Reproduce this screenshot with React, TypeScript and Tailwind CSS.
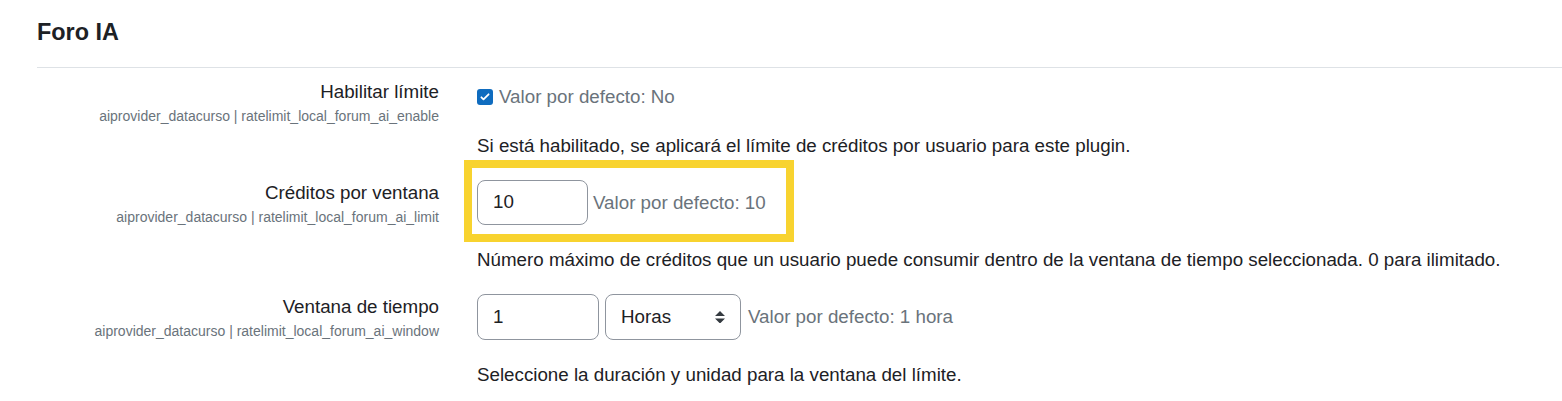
import { ReactNode } from "react";

const font = { fontFamily: '"Liberation Sans", Arial, sans-serif' };

function SettingRow({
  label,
  shortname,
  children,
  description,
  contentTop = "pt-0",
}: {
  label: string;
  shortname: string;
  children: ReactNode;
  description: string;
  contentTop?: string;
}) {
  return (
    <div className="grid grid-cols-[421px_1fr] mb-[19px]">
      <div className="text-right pr-[19px]">
        <div className="text-[18.75px] leading-[28px] text-[#1d2125]">{label}</div>
        <div className="text-[14px] leading-[20px] text-[#6a737b]">{shortname}</div>
      </div>
      <div className={`pl-[19px] ${contentTop}`}>
        {children}
        <p className="mt-[21px] text-[18.75px] leading-[28px] text-[#1d2125]">{description}</p>
      </div>
    </div>
  );
}

function DefaultInfo({ text, className }: { text: string; className: string }) {
  return <span className={`text-[18.75px] leading-[28px] text-[#6a737b] ${className}`}>{text}</span>;
}

export default function App() {
  return (
    <div className="bg-white min-h-[401px] pl-[37px] pt-[18px]" style={font}>
      <h3 className="text-[23.4px] leading-[28px] font-bold text-[#1d2125]">Foro IA</h3>
      <div className="mt-[21px] h-px bg-[#dee2e6]" />

      <div className="pt-[10px]">
        {/* Habilitar límite */}
        <SettingRow
          label="Habilitar límite"
          shortname="aiprovider_datacurso | ratelimit_local_forum_ai_enable"
          description="Si está habilitado, se aplicará el límite de créditos por usuario para este plugin."
          contentTop="pt-[5px]"
        >
          <div className="flex items-center h-[28px]">
            <span className="w-[16px] h-[16px] rounded-[3px] bg-[#0f6cbf] flex items-center justify-center">
              <svg width="12" height="12" viewBox="0 0 20 20" fill="none">
                <path d="M4 10.5l3.5 3.5L16 5.5" stroke="white" strokeWidth="3" strokeLinecap="round" strokeLinejoin="round" />
              </svg>
            </span>
            <DefaultInfo text="Valor por defecto: No" className="ml-[6px]" />
          </div>
        </SettingRow>

        {/* Créditos por ventana */}
        <SettingRow
          label="Créditos por ventana"
          shortname="aiprovider_datacurso | ratelimit_local_forum_ai_limit"
          description="Número máximo de créditos que un usuario puede consumir dentro de la ventana de tiempo seleccionada. 0 para ilimitado."
          contentTop="pt-[1px]"
        >
          <div className="relative flex items-center">
            <div className="w-[111px] h-[45px] border border-[#8f959e] rounded-[8px] flex items-center px-[15px] text-[18.75px] text-[#1d2125]">
              10
            </div>
            <DefaultInfo text="Valor por defecto: 10" className="ml-[5px]" />
            <div className="absolute -top-[20px] -left-[13px] w-[330px] h-[82px] border-[8px] border-[#f8d32f] pointer-events-none" />
          </div>
        </SettingRow>

        {/* Ventana de tiempo */}
        <SettingRow
          label="Ventana de tiempo"
          shortname="aiprovider_datacurso | ratelimit_local_forum_ai_window"
          description="Seleccione la duración y unidad para la ventana del límite."
          contentTop="pt-[1px]"
        >
          <div className="flex items-center">
            <div className="w-[122px] h-[46px] border border-[#8f959e] rounded-[8px] flex items-center px-[15px] text-[18.75px] text-[#1d2125]">
              1
            </div>
            <div className="ml-[6px] w-[136px] h-[46px] border border-[#8f959e] rounded-[8px] flex items-center justify-between pl-[15px] pr-[15px] text-[18.75px] text-[#1d2125]">
              <span>Horas</span>
              <svg width="10" height="12.5" viewBox="0 0 4 5">
                <path fill="#343a40" d="M2 0L0 2h4zm0 5L0 3h4z" />
              </svg>
            </div>
            <DefaultInfo text="Valor por defecto: 1 hora" className="ml-[7px]" />
          </div>
        </SettingRow>
      </div>
    </div>
  );
}
